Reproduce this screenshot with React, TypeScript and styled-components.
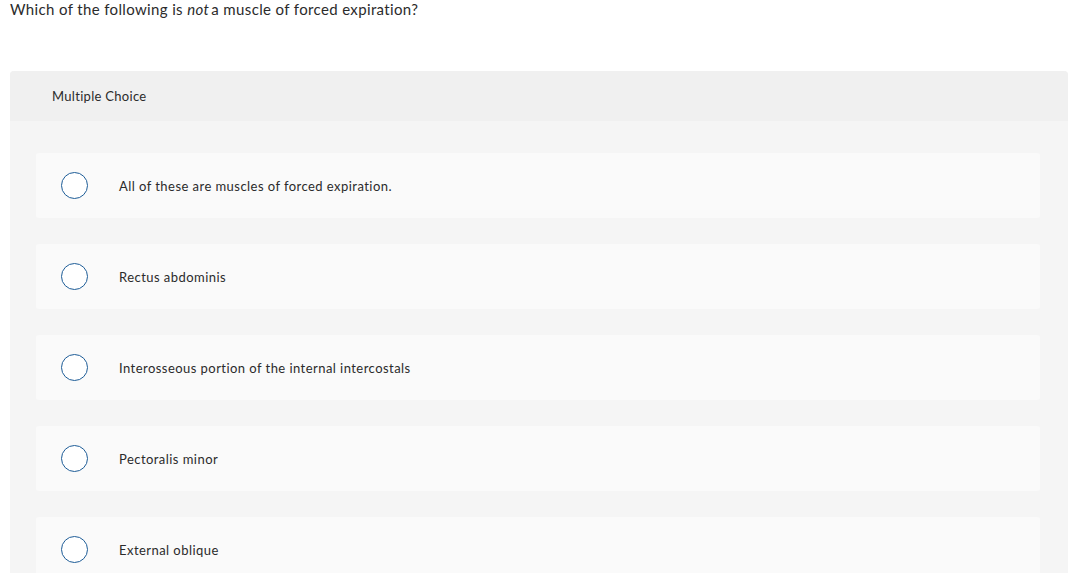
import * as React from "react";
import styled, { createGlobalStyle } from "styled-components";

const GlobalStyle = createGlobalStyle`
  html, body {
    margin: 0;
    padding: 0;
    background: #ffffff;
  }
  body {
    font-family: "Lato", "Liberation Sans", sans-serif;
    color: #2b2b2b;
  }
`;

const OPTIONS = [
  "All of these are muscles of forced expiration.",
  "Rectus abdominis",
  "Interosseous portion of the internal intercostals",
  "Pectoralis minor",
  "External oblique"
];

const Page = styled.div`
  height: 573px;
  overflow: hidden;
  padding: 0 4px 0 10px;
`;

const Question = styled.div`
  font-size: 15px;
  line-height: 18px;
  letter-spacing: 0.36px;
  color: #2b2b2b;
  height: 71px;

  em {
    font-style: italic;
    margin-right: -2px;
  }
`;

const Panel = styled.div`
  background: #f5f5f5;
  border-radius: 4px 4px 0 0;
  overflow: hidden;
`;

const PanelHeader = styled.div`
  height: 50px;
  background: #f0f0f0;
  display: flex;
  align-items: center;
  padding-left: 42px;
  font-size: 13px;
  letter-spacing: 0.3px;
  color: #2b2b2b;
`;

const OptionList = styled.div`
  display: flex;
  flex-direction: column;
  gap: 26px;
  padding: 32px 28px 0 26px;
`;

const OptionCard = styled.label`
  height: 65px;
  background: #fafafa;
  border-radius: 3px;
  display: flex;
  align-items: center;
  padding-left: 25px;
  gap: 31px;
  font-size: 13px;
  letter-spacing: 0.45px;
  color: #2b2b2b;
  cursor: pointer;
`;

const Radio = styled.span`
  width: 25px;
  height: 25px;
  border-radius: 50%;
  border: 1.5px solid #1d5c97;
  background: #ffffff;
  flex-shrink: 0;
`;

export default function App() {
  return (
    <>
      <GlobalStyle />
      <Page>
        <Question>
          Which of the following is <em>not</em> a muscle of forced expiration?
        </Question>
        <Panel>
          <PanelHeader>Multiple Choice</PanelHeader>
          <OptionList>
            {OPTIONS.map(option => (
              <OptionCard key={option}>
                <Radio />
                {option}
              </OptionCard>
            ))}
          </OptionList>
        </Panel>
      </Page>
    </>
  );
}
